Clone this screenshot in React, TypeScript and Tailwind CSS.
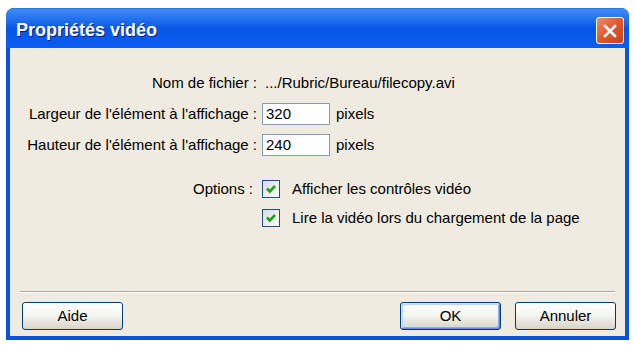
import React from "react";

const font = "font-['Liberation_Sans',Arial,sans-serif]";

const XpCheck = () => (
  <span className="w-[18px] h-[18px] border border-[#1c5180] bg-gradient-to-br from-[#dcdcd7] to-[#fbfbf9] flex items-center justify-center">
    <svg width="12" height="12" viewBox="0 0 12 12">
      <path d="M2 5.5 L4.8 8.5 L10 3" fill="none" stroke="#21a121" strokeWidth="2.6" />
    </svg>
  </span>
);

const XpButton = ({ label, isDefault = false }: { label: string; isDefault?: boolean }) => (
  <button
    className={`w-[101px] h-[28px] rounded-[3px] border border-[#003c74] bg-gradient-to-b from-[#ffffff] via-[#f3f3ef] to-[#d8d3c7] text-[15px] text-black ${font} ${
      isDefault
        ? "shadow-[inset_1px_1px_0_#cee7ff,inset_-1px_-1px_0_#6982ee,inset_2px_2px_0_#bcd4f6,inset_-2px_-2px_0_#89ade4]"
        : ""
    }`}
  >
    {label}
  </button>
);

export default function App() {
  return (
    <div className="w-[634px] h-[345px] bg-white pt-[8px] pl-[6px]">
      <div className="w-[623px] h-[332px] rounded-t-[8px] bg-[#0854e0] flex flex-col overflow-hidden">
        {/* Title bar */}
        <div className="h-[40px] flex items-center pl-[10px] pr-[5px] bg-gradient-to-b from-[#3f8cf3] via-[#0657e8] to-[#0a5df0] border-t border-[#2a74f0]">
          <span
            className={`text-[18px] font-bold text-white pt-[4px] ${font} [text-shadow:1px_1px_0_#0a1f8a]`}
          >
            Propriétés vidéo
          </span>
          <div className="ml-auto w-[28px] h-[27px] mt-[4px] rounded-[3px] border border-white bg-gradient-to-br from-[#ef8a66] via-[#e0572c] to-[#c84318] flex items-center justify-center">
            <svg width="16" height="16" viewBox="0 0 16 16">
              <path d="M3 3 L13 13 M13 3 L3 13" stroke="white" strokeWidth="2.6" strokeLinecap="square" />
            </svg>
          </div>
        </div>

        {/* Body */}
        <div className={`flex-1 mx-[4px] mb-[4px] bg-[#efebe0] flex flex-col pt-[24px] text-[15px] text-black ${font}`}>
          <div className="h-[22px] flex items-center">
            <span className="w-[247px] text-right">Nom de fichier :</span>
            <span className="ml-[8px]">.../Rubric/Bureau/filecopy.avi</span>
          </div>

          <div className="h-[22px] flex items-center mt-[9px]">
            <span className="w-[247px] text-right">Largeur de l'élément à l'affichage :</span>
            <span className="ml-[5px] w-[68px] h-[22px] border border-[#7f9db9] bg-white pl-[3px] flex items-center">320</span>
            <span className="ml-[6px]">pixels</span>
          </div>

          <div className="h-[22px] flex items-center mt-[9px]">
            <span className="w-[247px] text-right">Hauteur de l'élément à l'affichage :</span>
            <span className="ml-[5px] w-[68px] h-[22px] border border-[#7f9db9] bg-white pl-[3px] flex items-center">240</span>
            <span className="ml-[6px]">pixels</span>
          </div>

          <div className="h-[22px] flex items-center mt-[22px]">
            <span className="w-[243px] text-right">Options :</span>
            <span className="ml-[9px]"><XpCheck /></span>
            <span className="ml-[12px]">Afficher les contrôles vidéo</span>
          </div>

          <div className="h-[22px] flex items-center mt-[7px]">
            <span className="ml-[252px]"><XpCheck /></span>
            <span className="ml-[12px]">Lire la vidéo lors du chargement de la page</span>
          </div>

          <div className="mt-auto mx-[10px] border-t border-[#aca899] border-b border-b-white" />

          <div className="flex items-center pl-[12px] pr-[9px] pt-[9px] pb-[6px]">
            <XpButton label="Aide" />
            <div className="ml-auto flex gap-[14px]">
              <XpButton label="OK" isDefault />
              <XpButton label="Annuler" />
            </div>
          </div>
        </div>
      </div>
    </div>
  );
}
